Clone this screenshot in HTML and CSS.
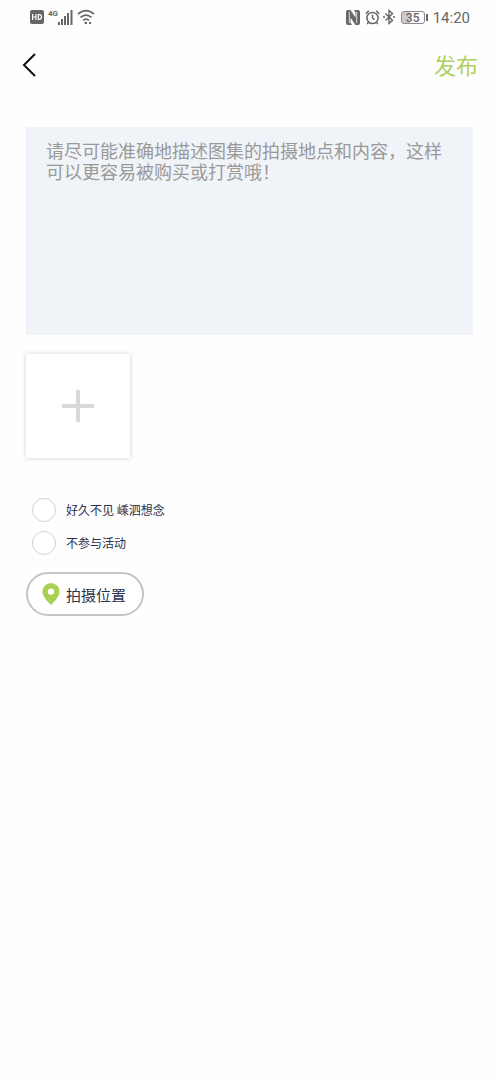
FILE: index.html
```html
<!DOCTYPE html>
<html lang="zh-CN">
<head>
<meta charset="utf-8">
<meta name="viewport" content="width=device-width, initial-scale=1">
<title>发布</title>
<link rel="stylesheet" href="styles.css">
</head>
<body>
<div class="status">
  <div class="status-group">
    <svg width="14" height="14" viewBox="0 0 14 14" aria-hidden="true"><rect width="14" height="14" rx="2" fill="#666"/><path d="M2.600 4v6M6 4v6M2.600 7H6M8.300 4.600v4.800h1.200q2-.2 2-2.400t-2-2.400z" fill="none" stroke="#fff" stroke-width="1.200"/></svg>
    <span class="network">4G</span>
    <svg class="icon-signal" width="15" height="15" viewBox="0 0 15 15" fill="#666" aria-hidden="true"><rect y="12" width="2" height="3"/><rect x="3" y="9" width="2" height="6"/><rect x="6" y="6" width="2" height="9"/><rect x="9" y="3" width="2" height="12"/><rect x="12.500" width="2" height="15"/></svg>
    <svg width="18" height="16" viewBox="0 0 18 16" fill="none" stroke="#666" stroke-width="1.700" aria-hidden="true"><path d="M1 5.200q8-7 16 0M3.500 8.400q5.500-4.600 11 0M6 11.400q3-2.600 6 0"/><circle cx="8.800" cy="14" r="1.300" fill="#666" stroke="none"/><path d="M12 14h2" stroke-width="2"/></svg>
  </div>
  <div class="status-group">
    <svg class="icon-nfc" width="14" height="15" viewBox="0 0 14 15" fill="#666" aria-hidden="true"><path d="M2 0h2.500l5 7.500V2.500L8 0h4q2 0 2 2v11q0 2-2 2H9.500l-5-7.500v5L6 15H2q-2 0-2-2V2q0-2 2-2z"/><path d="M3.300 1.800v11.400M10.700 1.800v11.400" stroke="#fefefe" stroke-width=".8"/></svg>
    <svg class="icon-alarm" width="15" height="15" viewBox="0 0 15 15" fill="none" stroke="#666" stroke-width="1.500" aria-hidden="true"><circle cx="7.500" cy="8" r="5.600"/><path d="M7.500 4.800V8l2 1.800M.8 3.800 3.800.9M14.200 3.800 11.200.9M3.500 12.200l-1.300 2M11.500 12.200l1.300 2"/></svg>
    <svg class="icon-bluetooth" width="12" height="16" viewBox="0 0 12 16" fill="none" stroke="#666" stroke-width="1.400" aria-hidden="true"><path d="m2.500 4.500 7 7L6 14.500v-13l3.500 3-7 7M0 8h2M10 8h2"/></svg>
    <span class="battery">35</span>
    <time class="clock">14:20</time>
  </div>
</div>
<header class="nav">
  <button class="back" type="button" aria-label="返回"><svg width="14" height="24" viewBox="0 0 14 24" fill="none" stroke="#111" stroke-width="2" aria-hidden="true"><path d="M13 1 2 12l11 11"/></svg></button>
  <button class="publish" type="button">发布</button>
</header>
<main class="content">
  <textarea class="description" aria-label="图集描述" placeholder="请尽可能准确地描述图集的拍摄地点和内容，这样可以更容易被购买或打赏哦！"></textarea>
  <button class="add" type="button" aria-label="添加图片"><svg width="34" height="34" viewBox="0 0 34 34" stroke="#d8d8d8" stroke-width="4" stroke-linecap="round" aria-hidden="true"><path d="M17 2.500v29M2.500 17h29"/></svg></button>
  <div class="options">
    <label class="option"><input class="radio" type="radio" name="activity">好久不见 嵊泗想念</label>
    <label class="option"><input class="radio" type="radio" name="activity">不参与活动</label>
  </div>
  <button class="location" type="button"><svg width="18" height="22" viewBox="0 0 18 22" aria-hidden="true"><path fill="#a9cf54" fill-rule="evenodd" d="M9 0a8.600 8.600 0 0 1 8.600 8.600C17.600 13.500 13 18 9 22 5 18 .4 13.500.4 8.600A8.600 8.600 0 0 1 9 0zm0 5.400a3.200 3.200 0 1 0 0 6.400 3.200 3.200 0 0 0 0-6.400z"/></svg>拍摄位置</button>
</main>
</body>
</html>
```
FILE: styles.css
```css
* { box-sizing: border-box; }

body {
  margin: 0;
  background: #fefefe;
  color: #29334f;
  font-family: "Noto Sans CJK SC", sans-serif;
}

button {
  padding: 0;
  border: 0;
  background: none;
  color: inherit;
  font-family: inherit;
  cursor: pointer;
}

svg { display: block; flex: none; }

.status {
  display: flex;
  justify-content: space-between;
  height: 34px;
  padding: 0 28px 0 30px;
  color: #666;
  font-family: Roboto, sans-serif;
}

.status-group { display: flex; align-items: center; }

.network {
  align-self: flex-start;
  margin: 9px 0 0 4px;
  font-size: 8px;
  font-weight: 700;
  line-height: 9px;
}

.icon-signal { margin-right: 4px; }
.icon-nfc { margin-right: 5px; }
.icon-alarm { margin-right: 3px; }
.icon-bluetooth { margin-right: 6px; }

.battery {
  position: relative;
  width: 24px;
  height: 13px;
  margin-right: 8px;
  border: 1px solid #888;
  border-radius: 3px;
  background: linear-gradient(90deg, #ccc 35%, transparent 35%);
  font-size: 12px;
  font-weight: 500;
  line-height: 12px;
  text-align: center;
}

.battery::after {
  content: "";
  position: absolute;
  top: 2px;
  right: -4px;
  width: 2px;
  height: 7px;
  background: #666;
}

.clock { padding-top: 1px; font-size: 15px; line-height: 20px; }

.nav {
  display: flex;
  align-items: center;
  justify-content: space-between;
  height: 62px;
  padding: 0 20px 0 22px;
}

.publish {
  padding-bottom: 3px;
  color: #afd061;
  font-size: 22px;
  line-height: 32px;
}

.content {
  display: flex;
  flex-direction: column;
  align-items: flex-start;
  padding: 31px 25px 24px 26px;
}

.description {
  display: block;
  width: 100%;
  height: 208px;
  padding: 13px 20px;
  border: 0;
  background: #f0f4f8;
  color: #333;
  font-family: inherit;
  font-size: 18px;
  line-height: 21px;
  resize: none;
}

.description::placeholder { color: #999; opacity: 1; }

.add {
  display: grid;
  place-items: center;
  width: 104px;
  height: 104px;
  margin-top: 19px;
  background: #fff;
  box-shadow: 0 0 5px rgba(0, 0, 0, 0.18);
}

.options {
  display: grid;
  gap: 9px;
  margin: 40px 0 17px 6px;
}

.option {
  display: flex;
  align-items: center;
  gap: 10px;
  font-size: 12px;
  line-height: 24px;
}

.radio {
  appearance: none;
  width: 24px;
  height: 24px;
  margin: 0;
  border: 1px solid #d2d2d2;
  border-radius: 50%;
  background: #fff;
}

.radio:checked { border: 7px solid #a9cf54; }

.location {
  display: flex;
  align-items: center;
  gap: 6px;
  height: 44px;
  padding: 0 16px 0 14px;
  border: 2px solid #c4c4c4;
  border-radius: 22px;
  background: #fff;
  font-size: 15px;
}
```
